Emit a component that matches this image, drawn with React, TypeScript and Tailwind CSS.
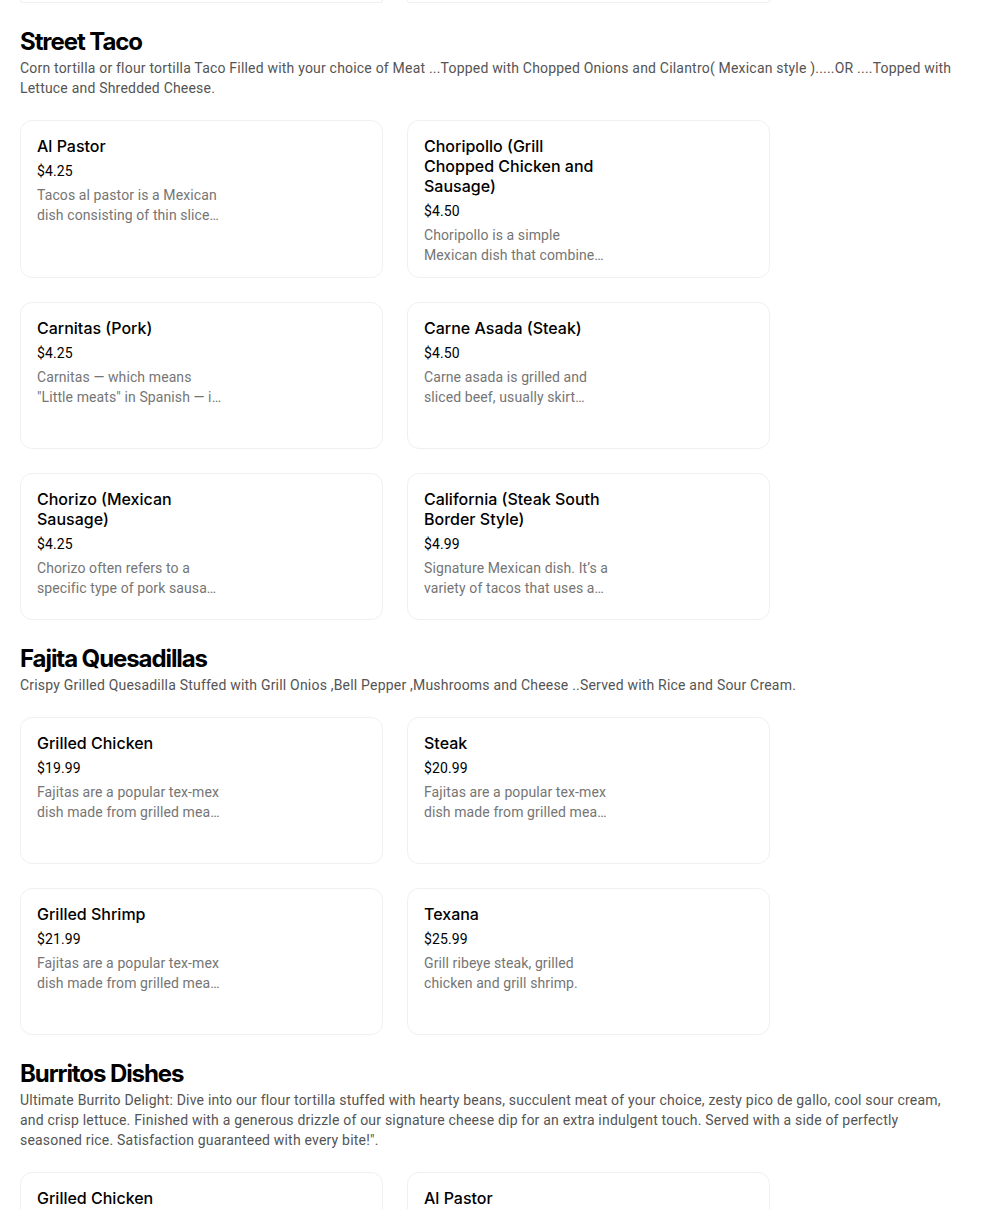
import React from 'react';

type Item = { name: string; price: string; desc: string };
type Section = { title: string; desc: string; items: Item[] };

const sections: Section[] = [
  {
    title: 'Street Taco',
    desc: 'Corn tortilla or flour tortilla Taco Filled with your choice of Meat ...Topped with Chopped Onions and Cilantro( Mexican style ).....OR ....Topped with Lettuce and Shredded Cheese.',
    items: [
      { name: 'Al Pastor', price: '$4.25', desc: 'Tacos al pastor is a Mexican dish consisting of thin sliced pork marinated in spices' },
      { name: 'Choripollo (Grill Chopped Chicken and Sausage)', price: '$4.50', desc: 'Choripollo is a simple Mexican dish that combines chicken and chorizo' },
      { name: 'Carnitas (Pork)', price: '$4.25', desc: 'Carnitas \u2014 which means "Little meats" in Spanish \u2014 is a dish of slow cooked pork' },
      { name: 'Carne Asada (Steak)', price: '$4.50', desc: 'Carne asada is grilled and sliced beef, usually skirt steak marinated and seared' },
      { name: 'Chorizo (Mexican Sausage)', price: '$4.25', desc: 'Chorizo often refers to a specific type of pork sausage from Mexico' },
      { name: 'California (Steak South Border Style)', price: '$4.99', desc: "Signature Mexican dish. It\u2019s a variety of tacos that uses a steak" },
    ],
  },
  {
    title: 'Fajita Quesadillas',
    desc: 'Crispy Grilled Quesadilla Stuffed with Grill Onios ,Bell Pepper ,Mushrooms and Cheese ..Served with Rice and Sour Cream.',
    items: [
      { name: 'Grilled Chicken', price: '$19.99', desc: 'Fajitas are a popular tex-mex dish made from grilled meat and peppers' },
      { name: 'Steak', price: '$20.99', desc: 'Fajitas are a popular tex-mex dish made from grilled meat and peppers' },
      { name: 'Grilled Shrimp', price: '$21.99', desc: 'Fajitas are a popular tex-mex dish made from grilled meat and peppers' },
      { name: 'Texana', price: '$25.99', desc: 'Grill ribeye steak, grilled chicken and grill shrimp.' },
    ],
  },
  {
    title: 'Burritos Dishes',
    desc: 'Ultimate Burrito Delight: Dive into our flour tortilla stuffed with hearty beans, succulent meat of your choice, zesty pico de gallo, cool sour cream, and crisp lettuce. Finished with a generous drizzle of our signature cheese dip for an extra indulgent touch. Served with a side of perfectly seasoned rice. Satisfaction guaranteed with every bite!".',
    items: [
      { name: 'Grilled Chicken', price: '$14.99', desc: 'Grilled chicken burrito with beans, rice and cheese' },
      { name: 'Al Pastor', price: '$14.99', desc: 'Al pastor burrito with beans, rice and cheese' },
    ],
  },
];

const ItemCard: React.FC<{ item: Item }> = ({ item }) => (
  <div className="min-h-[147px] rounded-xl border border-[#f0f0f0] bg-white pt-[15px] pb-3 px-4">
    <div className="w-[186px]">
      <div className="text-[16px] leading-5 font-medium text-black">{item.name}</div>
      <div className="mt-[5px] font-['Roboto',sans-serif] text-[14px] leading-5 tracking-[0.1px] text-black">{item.price}</div>
      <div className="mt-1 font-['Roboto',sans-serif] text-[14px] leading-5 tracking-[0.1px] text-[#757575] line-clamp-2">{item.desc}</div>
    </div>
  </div>
);

export default function App() {
  return (
    <div className="min-h-screen bg-white px-5 font-['Inter','Liberation_Sans',sans-serif] overflow-hidden">
      <div className="grid grid-cols-[363px_363px] gap-6">
        <div className="h-[3px] rounded-b-xl border-x border-b border-[#f0f0f0]" />
        <div className="h-[3px] rounded-b-xl border-x border-b border-[#f0f0f0]" />
      </div>
      {sections.map(section => (
        <div key={section.title} className="pt-[23px]">
          <h2 className="text-[24px] leading-8 font-bold tracking-[-0.045em] text-black">{section.title}</h2>
          <p className="font-['Roboto',sans-serif] text-[14px] leading-5 tracking-[0.2px] text-[#545454]">{section.desc}</p>
          <div className="mt-[22px] grid grid-cols-[363px_363px] gap-6">
            {section.items.map((item, i) => (
              <ItemCard key={i} item={item} />
            ))}
          </div>
        </div>
      ))}
    </div>
  );
}
